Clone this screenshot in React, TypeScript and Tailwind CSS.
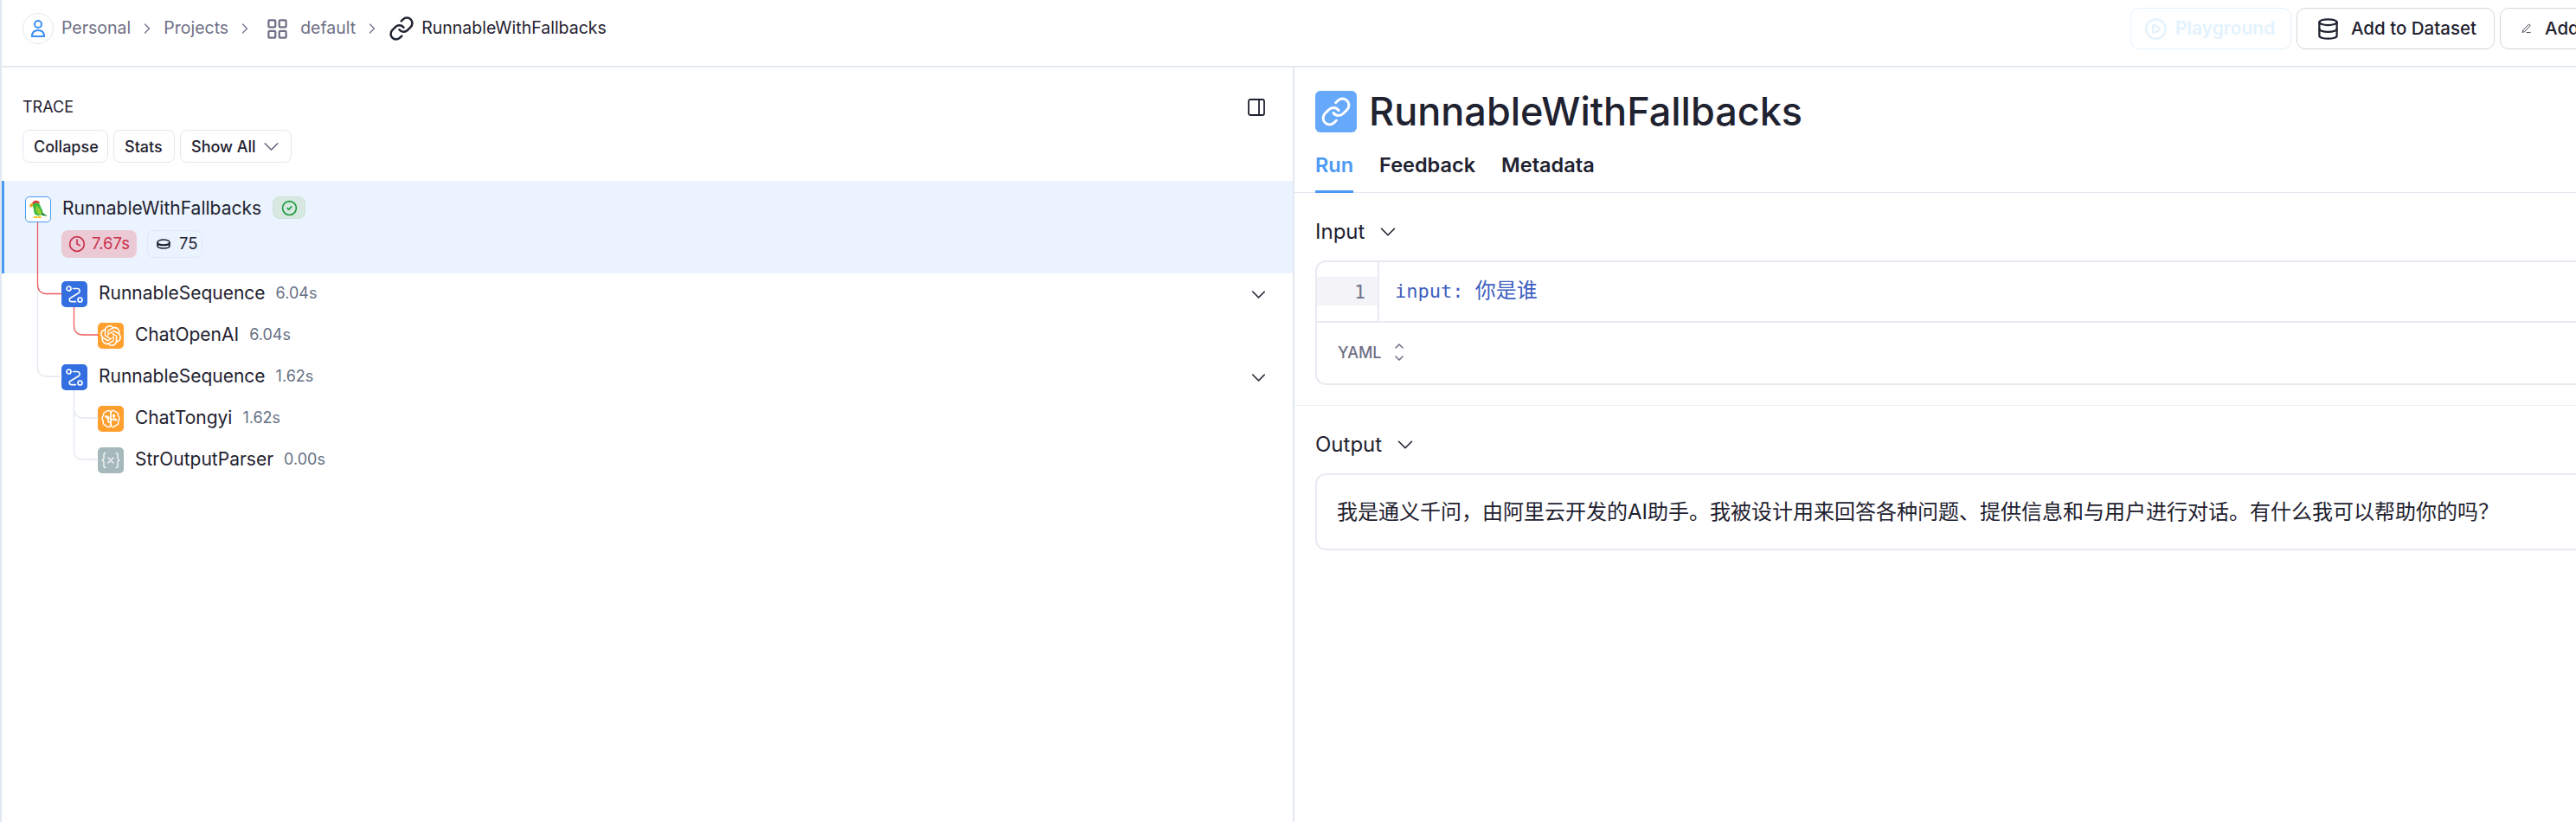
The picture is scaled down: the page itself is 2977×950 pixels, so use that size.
import React from "react";
import { ChevronRight, ChevronDown, LayoutGrid, Link, Database, CirclePlay, Clock, CircleCheck, PanelRight } from "lucide-react";
import { SiOpenai } from "react-icons/si";

const Sep = () => <ChevronRight className="w-[20px] h-[20px] text-[#70708a] mx-[9px] shrink-0" strokeWidth={1.5} />;

function Parrot() {
  return (
    <svg viewBox="0 0 26 26" className="w-[26px] h-[26px]">
      <path d="M16 15l8 6-6-1-3-2z" fill="#1f8a3a" />
      <path d="M6 7c1-3 6-4 8-1 2 2 2 5 4 8 1 2 0 5-3 6-4 1-7-2-7-6 0-2-1-4-2-7z" fill="#3dbb3f" />
      <path d="M11 9c3 1 5 5 6 9 0 1-2 2-3 1-3-2-4-6-3-10z" fill="#9acd32" />
      <path d="M6 7c0-3 3-5 6-4 2 0 3 2 3 3-3-1-6 0-9 1z" fill="#e23b3b" />
      <path d="M5 6c-2 1-2 3-1 5l3-2 0-3z" fill="#e9a020" />
      <path d="M8 21h4l1 2H8zM13 21h3l1 2h-4z" fill="#f6c41e" />
    </svg>
  );
}

function RouteIcon() {
  return (
    <svg viewBox="0 0 24 24" className="w-[24px] h-[24px]" fill="none" stroke="currentColor" strokeWidth="1.700" strokeLinecap="round" strokeLinejoin="round">
      <circle cx="5.500" cy="5.500" r="2.500" />
      <circle cx="18.500" cy="18.500" r="2.500" />
      <path d="M10.500 5.500h4.800a2.800 2.800 0 0 1 1.800 5L7.200 16.500a2.300 2.300 0 0 0 1.300 4.200h4.800" />
    </svg>
  );
}

function BrainIcon() {
  return (
    <svg viewBox="0 0 24 24" className="w-[24px] h-[24px]" fill="none" stroke="currentColor" strokeWidth="1.500" strokeLinecap="round" strokeLinejoin="round">
      <path d="M12 4.500a3 3 0 0 0-5.500-.5A3.500 3.500 0 0 0 3.500 8.500a3.800 3.800 0 0 0 0 6 3.600 3.600 0 0 0 3 5.300A3 3 0 0 0 12 19.500z" />
      <path d="M12 4.500a3 3 0 0 1 5.500-.5 3.500 3.500 0 0 1 3 4.500 3.800 3.800 0 0 1 0 6 3.600 3.600 0 0 1-3 5.300 3 3 0 0 1-5.500-.3z" />
      <path d="M12 13h3.500V9.500M12 16H9v-3.500M7 9.500h2.500" />
      <circle cx="15.500" cy="8.500" r="1" />
      <circle cx="9" cy="11.500" r="1" />
      <circle cx="6.500" cy="9.500" r="0.700" />
      <circle cx="17.500" cy="13" r="0.800" />
    </svg>
  );
}

function VarIcon() {
  return (
    <svg viewBox="0 0 24 24" className="w-[24px] h-[24px]" fill="none" stroke="currentColor" strokeWidth="1.600" strokeLinecap="round" strokeLinejoin="round" opacity="0.800">
      <path d="M6 3.500c-1.500 0-2 .8-2 2v4c0 1.200-.6 2-2 2.500 1.400.5 2 1.300 2 2.500v4c0 1.200.5 2 2 2" />
      <path d="M18 3.500c1.500 0 2 .8 2 2v4c0 1.200.6 2 2 2.500-1.400.5-2 1.300-2 2.500v4c0 1.200-.5 2-2 2" />
      <path d="M9 9l6 6M15 9l-6 6" />
    </svg>
  );
}

function PenIcon() {
  return (
    <svg viewBox="0 0 24 24" className="w-[24px] h-[24px]" fill="none" stroke="currentColor" strokeWidth="1.800" strokeLinecap="round" strokeLinejoin="round">
      <path d="M17 2.500a2.600 2.600 0 0 1 3.700 3.700L7.500 20 2.500 21.500 4 16.500z" />
      <path d="M13 22h9" />
    </svg>
  );
}

function Node({ bg, icon, label, time, indent, chevron }: { bg: string; icon: React.ReactNode; label: string; time: string; indent: string; chevron?: boolean }) {
  return (
    <div className={`h-[48px] flex items-center ${indent} pr-[26px]`}>
      <div className={`w-[30px] h-[30px] rounded-[5px] flex items-center justify-center text-white shrink-0 ${bg}`}>{icon}</div>
      <span className="ml-[13px] mb-[2px] text-[21px] text-[#1f2230]">{label}</span>
      <span className="ml-[12px] mb-[3px] text-[18px] text-[#667085]">{time}</span>
      {chevron && <ChevronDown className="ml-auto w-[27px] h-[27px] text-[#30323f]" strokeWidth={1.4} />}
    </div>
  );
}

export default function App() {
  return (
    <div className="w-[2977px] h-[950px] flex flex-col overflow-hidden bg-white border-l-2 border-[#e2e8f0] font-['Inter','Noto_Sans_CJK_SC',sans-serif] text-[#1f2230]">
      <header className="h-[78px] shrink-0 border-b-2 border-[#e2e8f0] flex items-center pl-[24px]">
        <div className="flex-1 flex items-center pb-[10px] text-[19.500px] text-[#6f7086]">
          <div className="w-[36px] h-[36px] rounded-full border border-[#e2e8f0] flex items-center justify-center mr-[9px]">
            <svg viewBox="0 0 24 24" className="w-[24px] h-[24px] text-[#3b8ff3]" fill="none" stroke="currentColor" strokeWidth="2">
              <circle cx="12" cy="7" r="4" />
              <path d="M5 21c0-5 3-7 7-7s7 2 7 7z" />
            </svg>
          </div>
          <span>Personal</span>
          <Sep />
          <span>Projects</span>
          <Sep />
          <LayoutGrid className="w-[27px] h-[27px] mr-[13px] ml-[5px]" strokeWidth={2} />
          <span>default</span>
          <Sep />
          <Link className="w-[30px] h-[30px] text-[#1f2230] mr-[8px]" strokeWidth={2} />
          <span className="text-[#1f2230]">RunnableWithFallbacks</span>
        </div>
        <div className="w-[515px] shrink-0 flex items-center gap-[6px] overflow-hidden pb-[10px]">
          <div className="w-[186px] h-[48px] shrink-0 rounded-[10px] border border-[#e3f2fd] flex items-center pl-[15px] gap-[9px] text-[#e3f2fd] text-[21px] font-semibold">
            <CirclePlay className="w-[27px] h-[27px]" strokeWidth={2} />
            <span>Playground</span>
          </div>
          <div className="w-[229px] h-[48px] shrink-0 rounded-[10px] border border-[#d4d6dc] flex items-center pl-[22px] gap-[13px] text-[20.500px] font-medium">
            <Database className="w-[27px] h-[27px]" strokeWidth={2} />
            <span>Add to Dataset</span>
          </div>
          <div className="w-[300px] h-[48px] shrink-0 rounded-[10px] border border-[#d4d6dc] flex items-center pl-[24px] gap-[16px] text-[20.500px] font-medium whitespace-nowrap">
            <PenIcon />
            <span>Add to Annotation Queue</span>
          </div>
        </div>
      </header>
      <div className="flex-1 flex min-h-0">
        <aside className="w-[1492px] shrink-0 flex flex-col">
          <div className="h-[131px] shrink-0 pl-[24px] pt-[36px] pr-[30px]">
            <div className="flex items-center justify-between h-[20px]">
              <span className="text-[18px] leading-[20px]">TRACE</span>
              <PanelRight className="w-[24px] h-[24px]" strokeWidth={1.8} />
            </div>
            <div className="flex gap-[6px] mt-[16px]">
              <div className="h-[38px] px-[12px] w-[99px] rounded-[8px] border border-[#e2e8f0] flex items-center text-[18px] font-medium whitespace-nowrap">Collapse</div>
              <div className="h-[38px] px-[12px] w-[71px] rounded-[8px] border border-[#e2e8f0] flex items-center text-[18px] font-medium">Stats</div>
              <div className="h-[38px] pl-[12px] w-[129px] rounded-[8px] border border-[#e2e8f0] flex items-center gap-[3px] text-[18px] font-medium whitespace-nowrap">
                Show All
                <ChevronDown className="w-[29px] h-[29px] text-[#6f7086]" strokeWidth={1.2} />
              </div>
            </div>
          </div>
          <div className="relative">
            <div className="h-[107px] bg-[#ebf3fe] border-l-[3px] border-[#4a9af5] pl-[24px] pt-[18px]">
              <div className="flex items-center h-[30px]">
                <div className="w-[30px] h-[30px] rounded-[5px] bg-white border border-[#4a9af5] flex items-center justify-center shrink-0"><Parrot /></div>
                <span className="ml-[13px] mb-[2px] text-[21px]">RunnableWithFallbacks</span>
                <div className="ml-[13px] mb-[4px] w-[38px] h-[26px] rounded-[8px] bg-[#d6e8e0] border border-[#cfe3d8] flex items-center justify-center"><CircleCheck className="w-[19px] h-[19px] text-[#1a9a3c]" strokeWidth={2} /></div>
              </div>
              <div className="flex items-center mt-[9px] ml-[42px] gap-[12px]">
                <div className="h-[32px] w-[87px] rounded-[8px] bg-[#eccad5] text-[#c9304c] flex items-center pl-[8px] gap-[7px] text-[18.500px]"><Clock className="w-[20px] h-[20px]" strokeWidth={2} />7.67s</div>
                <div className="h-[32px] w-[64px] rounded-[8px] border border-[#e2e8f0] flex items-center pl-[9px] gap-[9px] text-[18.500px]">
                  <svg viewBox="0 0 18 12" className="w-[18px] h-[12px]" fill="none" stroke="currentColor" strokeWidth="1.600">
                    <ellipse cx="9" cy="4" rx="7" ry="3" />
                    <path d="M2 4v4c0 1.700 3 3 7 3s7-1.300 7-3V4M2 6c2 2 12 2 14 0" />
                  </svg>
                  75
                </div>
              </div>
            </div>
            <div>
              <Node bg="bg-[#336fe0]" icon={<RouteIcon />} label="RunnableSequence" time="6.04s" indent="pl-[69px]" chevron />
              <Node bg="bg-[#ff9f2e]" icon={<SiOpenai className="w-[24px] h-[24px]" />} label="ChatOpenAI" time="6.04s" indent="pl-[111px]" />
              <Node bg="bg-[#336fe0]" icon={<RouteIcon />} label="RunnableSequence" time="1.62s" indent="pl-[69px]" chevron />
              <Node bg="bg-[#ff9f2e]" icon={<BrainIcon />} label="ChatTongyi" time="1.62s" indent="pl-[111px]" />
              <Node bg="bg-[#a5b8bc]" icon={<VarIcon />} label="StrOutputParser" time="0.00s" indent="pl-[111px]" />
            </div>
            <svg className="absolute left-0 top-0 pointer-events-none" width="160" height="340" fill="none" strokeWidth="1.300">
              <path d="M41.500 125v91c0 6 4 10 10 10h18" stroke="#e2e8f0" />
              <path d="M83.500 242v22c0 6 4 10 10 10h18" stroke="#e2e8f0" />
              <path d="M83.500 242v70c0 6 4 10 10 10h18" stroke="#e2e8f0" />
              <path d="M41.500 48v72.500c0 6 4 10 10 10h18" stroke="#ee5a5f" />
              <path d="M83.500 146v22c0 6 4 10 10 10h18" stroke="#ee5a5f" />
            </svg>
          </div>
        </aside>
        <main className="flex-1 min-w-0 border-l-2 border-[#e2e8f0] overflow-hidden">
          <div className="flex items-center h-[48px] mt-[27px] pl-[24px]">
            <div className="w-[48px] h-[48px] rounded-[6px] bg-[#66a9fb] flex items-center justify-center shrink-0"><Link className="w-[36px] h-[36px] text-white" strokeWidth={2} /></div>
            <h1 className="ml-[14px] mb-[2px] text-[45px] font-medium leading-none">RunnableWithFallbacks</h1>
          </div>
          <nav className="h-[70px] border-b border-[#e2e8f0] flex items-stretch pl-[24px] gap-[30px] text-[23.500px] font-semibold">
            <div className="flex items-end pb-[12px] border-b-[3px] border-[#4a9af5] text-[#4a9af5] mb-[-1px]">Run</div>
            <div className="flex items-end pb-[14px]">Feedback</div>
            <div className="flex items-end pb-[14px]">Metadata</div>
          </nav>
          <section className="h-[246px] border-b border-[#eef1f5] pl-[24px] pt-[28px]">
            <div className="flex items-center gap-[12px] h-[34px] text-[24px]">Input<ChevronDown className="w-[30px] h-[30px]" strokeWidth={1.3} /></div>
            <div className="mt-[16px] w-[1600px] h-[144px] rounded-[12px] border-2 border-[#e7ebf1] flex flex-col">
              <div className="h-[70px] flex border-b-2 border-[#e7ebf1]">
                <div className="w-[72px] border-r-2 border-[#e7ebf1] pt-[17px]">
                  <div className="h-[33px] bg-[#f3f3f8] text-right pr-[14px] font-['DejaVu_Sans_Mono',monospace] text-[21px] leading-[36px] text-[#6f7086]">1</div>
                </div>
                <div className="pl-[18px] pt-[15px] font-['DejaVu_Sans_Mono','Noto_Sans_CJK_SC',monospace] text-[22px] leading-[36px] text-[#3f5fc0]">input: <span className="text-[24px]">你是谁</span></div>
              </div>
              <div className="flex-1 flex items-center pl-[24px] pb-[2px] gap-[12px] text-[18px] font-medium text-[#6f7086]">
                YAML
                <svg viewBox="0 0 16 28" className="w-[16px] h-[28px]" fill="none" stroke="currentColor" strokeWidth="1.600" strokeLinecap="round" strokeLinejoin="round">
                  <path d="M4 9l4-4 4 4M4 19l4 4 4-4" />
                </svg>
              </div>
            </div>
          </section>
          <section className="pl-[24px] pt-[28px]">
            <div className="flex items-center gap-[12px] h-[34px] text-[24px]">Output<ChevronDown className="w-[30px] h-[30px]" strokeWidth={1.3} /></div>
            <div className="mt-[16px] w-[1600px] h-[89px] rounded-[12px] border-2 border-[#e7ebf1] flex items-center pl-[23px] text-[24px] whitespace-nowrap">我是通义千问，由阿里云开发的AI助手。我被设计用来回答各种问题、提供信息和与用户进行对话。有什么我可以帮助你的吗？</div>
          </section>
        </main>
      </div>
    </div>
  );
}
